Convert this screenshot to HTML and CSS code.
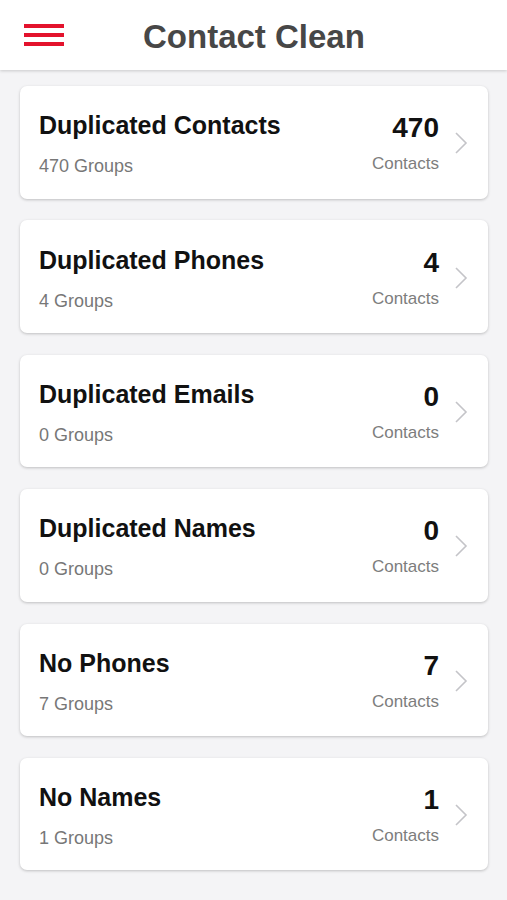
FILE: index.html
```html
<!DOCTYPE html>
<html>
<head>
<meta name="viewport" content="width=device-width, initial-scale=1">
<title>Contact Clean</title>
<link rel="stylesheet" href="styles.css">
</head>
<body>

<div class="header">
  <div class="menu-btn">
    <span></span><span></span><span></span>
  </div>
  <h1 class="title">Contact Clean</h1>
</div>

<div class="list">
  <div class="card">
    <div class="card-left">
      <div class="card-title">Duplicated Contacts</div>
      <div class="card-sub">470 Groups</div>
    </div>
    <div class="card-right">
      <div class="count">470</div>
      <div class="count-label">Contacts</div>
    </div>
    <svg class="chevron" width="14" height="24" viewBox="0 0 14 24"><path d="M2 2 L12 12 L2 22" fill="none" stroke="#c4c4c8" stroke-width="1.6"/></svg>
  </div>

  <div class="card">
    <div class="card-left">
      <div class="card-title">Duplicated Phones</div>
      <div class="card-sub">4 Groups</div>
    </div>
    <div class="card-right">
      <div class="count">4</div>
      <div class="count-label">Contacts</div>
    </div>
    <svg class="chevron" width="14" height="24" viewBox="0 0 14 24"><path d="M2 2 L12 12 L2 22" fill="none" stroke="#c4c4c8" stroke-width="1.6"/></svg>
  </div>

  <div class="card">
    <div class="card-left">
      <div class="card-title">Duplicated Emails</div>
      <div class="card-sub">0 Groups</div>
    </div>
    <div class="card-right">
      <div class="count">0</div>
      <div class="count-label">Contacts</div>
    </div>
    <svg class="chevron" width="14" height="24" viewBox="0 0 14 24"><path d="M2 2 L12 12 L2 22" fill="none" stroke="#c4c4c8" stroke-width="1.6"/></svg>
  </div>

  <div class="card">
    <div class="card-left">
      <div class="card-title">Duplicated Names</div>
      <div class="card-sub">0 Groups</div>
    </div>
    <div class="card-right">
      <div class="count">0</div>
      <div class="count-label">Contacts</div>
    </div>
    <svg class="chevron" width="14" height="24" viewBox="0 0 14 24"><path d="M2 2 L12 12 L2 22" fill="none" stroke="#c4c4c8" stroke-width="1.6"/></svg>
  </div>

  <div class="card">
    <div class="card-left">
      <div class="card-title">No Phones</div>
      <div class="card-sub">7 Groups</div>
    </div>
    <div class="card-right">
      <div class="count">7</div>
      <div class="count-label">Contacts</div>
    </div>
    <svg class="chevron" width="14" height="24" viewBox="0 0 14 24"><path d="M2 2 L12 12 L2 22" fill="none" stroke="#c4c4c8" stroke-width="1.6"/></svg>
  </div>

  <div class="card">
    <div class="card-left">
      <div class="card-title">No Names</div>
      <div class="card-sub">1 Groups</div>
    </div>
    <div class="card-right">
      <div class="count">1</div>
      <div class="count-label">Contacts</div>
    </div>
    <svg class="chevron" width="14" height="24" viewBox="0 0 14 24"><path d="M2 2 L12 12 L2 22" fill="none" stroke="#c4c4c8" stroke-width="1.6"/></svg>
  </div>
</div>

</body>
</html>
```

FILE: styles.css
```css
* {box-sizing: border-box;}

body {
  margin: 0;
  font-family: "Liberation Sans", Arial, Helvetica, sans-serif;
  background-color: #f4f4f6;
}

/* top bar with the menu button and title */
.header {
  height: 70px;
  background-color: #fff;
  box-shadow: 0 1px 3px rgba(0,0,0,0.18);
  display: flex;
  align-items: center;
  position: relative;
  z-index: 2;
}

.menu-btn {
  width: 40px;
  margin-left: 24px;
  display: flex;
  flex-direction: column;
  gap: 5px;
}

.menu-btn span {
  display: block;
  height: 4px;
  background-color: #e3122c;
}

.title {
  margin: 4px 0 0 79px;
  font-size: 33px;
  font-weight: bold;
  color: #474747;
}

/* list of cards */
.list {
  padding: 16px 19px 20px 20px;
  display: flex;
  flex-direction: column;
  gap: 21.9px;
}

.card {
  height: 112.5px;
  background-color: #fff;
  border-radius: 7px;
  box-shadow: 0 1px 3px rgba(0,0,0,0.22);
  display: flex;
  align-items: center;
  padding: 8px 20px 0 19px;
}

.card-left {
  flex: 1;
}

.card-title {
  font-size: 25px;
  font-weight: bold;
  color: #111;
  margin-top: -4px;
}

.card-sub {
  font-size: 18px;
  color: #777;
  margin-top: 16px;
}

.card-right {
  text-align: right;
}

.count {
  font-size: 28px;
  font-weight: bold;
  color: #111;
  margin-top: -6px;
}

.count-label {
  font-size: 17px;
  color: #7d7d7d;
  margin-top: 10px;
}

.chevron {
  margin-left: 15px;
  margin-top: -6px;
}
```
